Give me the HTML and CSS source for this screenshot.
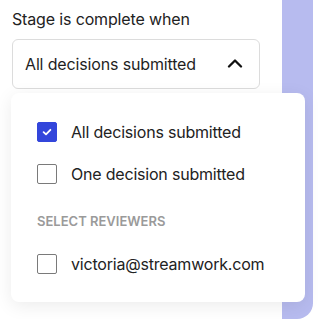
FILE: index.html
```html
<!DOCTYPE html>
<html lang="en">

<head>
    <meta charset="UTF-8">
    <meta name="viewport" content="width=device-width, initial-scale=1.0">
    <title>Stage settings</title>
    <link rel="stylesheet" href="styles.css">
</head>

<body>
    <div class="page">
        <div class="field">
            <label class="field-label">Stage is complete when</label>
            <div class="select">
                <span>All decisions submitted</span>
                <svg class="chevron" width="16" height="10" viewBox="0 0 16 10">
                    <path d="M2 8.5 L8 2.5 L14 8.5" fill="none" stroke="#111" stroke-width="2.3" stroke-linecap="round" stroke-linejoin="round"/>
                </svg>
            </div>
        </div>
        <div class="side-panel"></div>

        <div class="menu">
            <div class="option">
                <span class="box checked">
                    <svg width="12" height="12" viewBox="0 0 12 12">
                        <path d="M2.6 6.2 L5 8.4 L9.4 3.8" fill="none" stroke="#fff" stroke-width="1.8" stroke-linecap="round" stroke-linejoin="round"/>
                    </svg>
                </span>
                <span>All decisions submitted</span>
            </div>
            <div class="option">
                <span class="box"></span>
                <span>One decision submitted</span>
            </div>
            <div class="menu-heading">SELECT REVIEWERS</div>
            <div class="option">
                <span class="box"></span>
                <span>victoria@streamwork.com</span>
            </div>
        </div>
    </div>
</body>

</html>
```

FILE: styles.css
```css
* {
    box-sizing: border-box;
    margin: 0;
    padding: 0;
}

body {
    background: #fff;
    font-family: "Inter", "Liberation Sans", sans-serif;
    color: #1f1f1f;
    overflow: hidden;
}

.page {
    position: relative;
    display: flex;
    width: 318px;
    height: 319px;
}

.field {
    padding: 9px 0 0 12px;
}

.field-label {
    display: block;
    font-size: 16px;
    line-height: 20px;
    letter-spacing: -0.15px;
    color: #222;
}

.select {
    display: flex;
    align-items: center;
    justify-content: space-between;
    width: 248px;
    height: 50px;
    margin-top: 10px;
    padding: 0 16px 0 12px;
    border: 1px solid #dcdcdc;
    border-radius: 6px;
    font-size: 16px;
    letter-spacing: -0.15px;
    color: #1f1f1f;
}

.chevron {
    margin-top: -2px;
}

.side-panel {
    width: 31px;
    height: 319px;
    margin: 0 5px 0 auto;
    background: #b7bbef;
    border-bottom-right-radius: 16px;
}

.menu {
    position: absolute;
    left: 11px;
    top: 93px;
    width: 294px;
    height: 209px;
    padding: 29px 0 0 26px;
    background: #fff;
    border-radius: 8px;
    box-shadow: 0 4px 18px rgba(0, 0, 0, 0.08);
    display: flex;
    flex-direction: column;
}

.option {
    display: flex;
    align-items: center;
    gap: 14px;
    height: 20px;
    font-size: 16px;
    letter-spacing: -0.2px;
    color: #222;
}

.option + .option {
    margin-top: 22px;
}

.box {
    display: flex;
    align-items: center;
    justify-content: center;
    width: 20px;
    height: 20px;
    border: 1px solid #7a7a7a;
    border-radius: 2px;
    flex-shrink: 0;
}

.box.checked {
    background: #3346db;
    border-color: #3346db;
}

.menu-heading {
    margin: 29px 0 24px;
    font-size: 13px;
    line-height: 17px;
    font-weight: 600;
    color: #9a9a9a;
}
```
